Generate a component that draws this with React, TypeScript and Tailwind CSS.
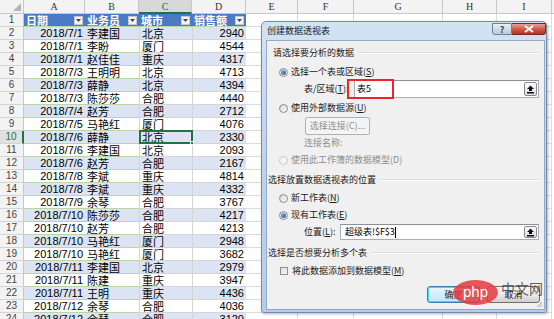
import React from 'react';

const rows: [string, string, string, string][] = [
  ['2018/7/1', '李建国', '北京', '2940'],
  ['2018/7/1', '李盼', '厦门', '4544'],
  ['2018/7/1', '赵佳佳', '重庆', '4317'],
  ['2018/7/3', '王明明', '北京', '4713'],
  ['2018/7/3', '薛静', '北京', '4394'],
  ['2018/7/3', '陈莎莎', '合肥', '4440'],
  ['2018/7/4', '赵芳', '合肥', '2712'],
  ['2018/7/5', '马艳红', '厦门', '4076'],
  ['2018/7/6', '薛静', '北京', '2330'],
  ['2018/7/6', '李建国', '北京', '2093'],
  ['2018/7/6', '赵芳', '合肥', '2167'],
  ['2018/7/8', '李斌', '重庆', '4814'],
  ['2018/7/8', '李斌', '重庆', '4332'],
  ['2018/7/9', '余琴', '合肥', '3767'],
  ['2018/7/10', '陈莎莎', '合肥', '4217'],
  ['2018/7/10', '赵芳', '合肥', '4213'],
  ['2018/7/10', '马艳红', '厦门', '2948'],
  ['2018/7/10', '马艳红', '厦门', '3682'],
  ['2018/7/11', '李建国', '北京', '2979'],
  ['2018/7/11', '陈建', '重庆', '3947'],
  ['2018/7/11', '王明', '重庆', '4436'],
  ['2018/7/12', '余琴', '合肥', '4036'],
  ['2018/7/12', '余琴', '合肥', '3120'],
];

const letters = ['A', 'B', 'C', 'D', 'E', 'F', 'G', 'H', 'I'];
const widths = ['w-[61px]', 'w-[54px]', 'w-[53px]', 'w-[54px]', 'w-[52px]', 'w-[56px]', 'w-[89px]', 'w-[54px]', 'w-[55px]'];
const headers = ['日期', '业务员', '城市', '销售额'];

const cjk = "font-['Noto_Sans_CJK_SC',sans-serif]";
const num = "font-['Liberation_Sans','Noto_Sans_CJK_SC',sans-serif]";

const RowNum = ({ n, active }: { n: number; active?: boolean }) => (
  <div
    className={`w-[24px] shrink-0 border-b border-[#d4d4d4] text-center text-[10px] leading-[12px] ${num} ${
      active ? 'bg-[#e1e1e1] text-[#217346] border-r-2 border-r-[#217346]' : 'bg-[#f3f3f3] text-[#444] border-r border-r-[#c8c8c8]'
    }`}
  >
    {n}
  </div>
);

const Filter = () => (
  <div className="ml-auto mr-[2px] w-[9px] h-[9px] bg-[#f4f4f4] border border-[#c8c8c8] flex items-center justify-center">
    <svg width="5" height="3" viewBox="0 0 5 3">
      <path d="M0 0h5L2.5 3z" fill="#444" />
    </svg>
  </div>
);

const Radio = ({ on, off }: { on?: boolean; off?: boolean }) => (
  <div
    className={`w-[9px] h-[9px] shrink-0 rounded-full border flex items-center justify-center ${
      off ? 'border-[#c9c9c9] bg-[#f4f4f4]' : 'border-[#8a8a8a] bg-gradient-to-br from-[#d8d8d8] to-[#fafafa]'
    }`}
  >
    {on && <div className="w-[5px] h-[5px] rounded-full bg-gradient-to-br from-[#8fb5e6] to-[#1d55a6]" />}
  </div>
);

const Collapse = () => (
  <div className="ml-auto my-[1px] mr-[1px] w-[13px] shrink-0 rounded-[2px] border border-[#8a8a8a] bg-gradient-to-b from-[#fbfbfb] to-[#dcdcdc] flex items-center justify-center">
    <svg width="9" height="9" viewBox="0 0 9 9">
      <path d="M4.5 0.5L8 4H6V6H3V4H1z" fill="#111" />
      <rect x="1" y="7" width="7" height="1.5" fill="#111" />
    </svg>
  </div>
);

const Section = ({ title }: { title: string }) => (
  <div className="flex items-center h-[12px] pr-[5px]">
    <span className="text-[9px] leading-[12px] text-[#1a1a1a]">{title}</span>
    <div className="flex-1 ml-[4px] h-[2px] border-t border-[#d5dfe5] border-b border-b-white" />
  </div>
);

export default function App() {
  return (
    <div className="relative w-[554px] h-[319px] overflow-hidden bg-white">
      {/* spreadsheet */}
      <div className="flex h-[14px] bg-[#f3f3f3]">
        <div className="relative w-[24px] shrink-0 border-r border-b border-[#c8c8c8]">
          <svg className="absolute right-[2px] bottom-[2px]" width="8" height="8" viewBox="0 0 8 8">
            <path d="M8 0V8H0z" fill="#b4b4b4" />
          </svg>
        </div>
        {letters.map((l, i) => (
          <div
            key={l}
            className={`${widths[i]} shrink-0 border-r text-center text-[10px] leading-[13px] font-['Liberation_Serif',serif] ${
              l === 'C'
                ? 'bg-[#d8d8d8] text-[#217346] border-b-2 border-b-[#217346] border-r-[#c8c8c8]'
                : 'text-[#333] border-b border-[#c8c8c8]'
            }`}
          >
            {l}
          </div>
        ))}
        <div className="flex-1 border-b border-[#c8c8c8]" />
      </div>

      <div className="flex h-[13px]">
        <RowNum n={1} />
        {headers.map((h, i) => (
          <div
            key={h}
            className={`${widths[i]} shrink-0 flex items-center bg-[#4a79c6] border-b border-[#b8d6aa] pl-[2px] text-white font-bold text-[11px] leading-[13px] ${cjk}`}
          >
            <span>{h}</span>
            <Filter />
          </div>
        ))}
        {widths.slice(4).map((w) => (
          <div key={w} className={`${w} shrink-0 border-r border-b border-[#dadcdd]`} />
        ))}
      </div>

      {rows.map((r, idx) => {
        const n = idx + 2;
        const band = n % 2 === 0 ? 'bg-[#dce4f4]' : 'bg-white';
        const cell = `shrink-0 whitespace-nowrap border-b border-[#b8d6aa] text-[11px] leading-[12px] text-black ${band}`;
        return (
          <div key={n} className="flex h-[13px]">
            <RowNum n={n} active={n === 10} />
            <div className={`${widths[0]} ${cell} text-right pr-[2px] text-[10.5px] ${num}`}>{r[0]}</div>
            <div className={`${widths[1]} ${cell} pl-[2px] ${cjk}`}>{r[1]}</div>
            <div className={`${widths[2]} ${cell} relative pl-[2px] border-l border-[#d4d4d4] ${cjk}`}>
              {r[2]}
              {n === 10 && (
                <div className="absolute -left-[1px] -top-[1px] w-[54px] h-[14px] border-2 border-[#217346]">
                  <div className="absolute -right-[3px] -bottom-[3px] w-[4px] h-[4px] bg-[#217346] border border-white" />
                </div>
              )}
            </div>
            <div className={`${widths[3]} ${cell} text-right pr-[2px] border-l border-[#d4d4d4] text-[10.5px] ${num}`}>{r[3]}</div>
            {widths.slice(4).map((w) => (
              <div key={w} className={`${w} shrink-0 border-r border-b border-[#dadcdd]`} />
            ))}
          </div>
        );
      })}

      {/* dialog window */}
      <div className={`absolute left-[261px] top-[21px] w-[286px] h-[292px] flex flex-col rounded-t-[5px] rounded-b-[3px] border border-[#6f8cae] bg-gradient-to-b from-[#d3e3f4] via-[#bcd3ec] to-[#b4cde9] shadow-[1px_1px_3px_rgba(0,0,0,0.3)] ${cjk}`}>
        <div className="relative h-[18px] shrink-0 pl-[5px] flex items-center text-[9px] text-[#1a1a1a]">
          创建数据透视表
          <div className="absolute right-[0px] top-[1px] flex h-[12px]">
            <div className="w-[20px] rounded-bl-[3px] border border-[#6d7f97] bg-gradient-to-b from-[#e9eff6] to-[#b9c9dc] flex items-center justify-center text-[9px] leading-none font-bold text-[#444]">
              ?
            </div>
            <div className="w-[34px] rounded-br-[3px] border border-l-0 border-[#7a2a20] bg-gradient-to-b from-[#e7a397] via-[#cf5b48] to-[#b6321f] flex items-center justify-center">
              <svg width="10" height="8" viewBox="0 0 10 8">
                <path d="M1 1L9 7M9 1L1 7" stroke="#fff" strokeWidth="2" />
              </svg>
            </div>
          </div>
        </div>

        <div className="relative flex-1 ml-[4px] mr-[1px] mb-[2px] border border-[#93a9c4] bg-[#f0f0f0] pl-[6px] pt-[6px] flex flex-col whitespace-nowrap text-[9px] leading-[12px] text-[#1a1a1a]">
          <Section title="请选择要分析的数据" />
          <div className="mt-[7px] ml-[6px] flex items-center gap-[3px] h-[12px]">
            <Radio on />
            <span>选择一个表或区域(<u>S</u>)</span>
          </div>
          <div className="mt-[2px] flex items-center h-[18px]">
            <span className="ml-[31px] w-[50px] shrink-0">表/区域(<u>T</u>):</span>
            <div className="mr-[5px] flex-1 h-full flex bg-white border border-[#abadb3] border-t-[#8d8f96]">
              <span className="pl-[2px] self-center text-black">表5</span>
              <Collapse />
            </div>
          </div>
          <div className="mt-[4px] ml-[6px] flex items-center gap-[3px] h-[12px]">
            <Radio />
            <span>使用外部数据源(<u>U</u>)</span>
          </div>
          <div className="mt-[3px] ml-[32px] w-[65px] h-[18px] rounded-[2px] border border-[#adb2b5] bg-[#f4f4f4] flex items-center justify-center text-[#8d8d8d]">
            选择连接(C)...
          </div>
          <div className="mt-[2px] ml-[31px] h-[12px] text-[#8d8d8d]">连接名称:</div>
          <div className="mt-[5px] ml-[6px] flex items-center gap-[3px] h-[12px] text-[#8d8d8d]">
            <Radio off />
            <span>使用此工作簿的数据模型(D)</span>
          </div>
          <div className="mt-[8px] -ml-[5px]">
            <Section title="选择放置数据透视表的位置" />
          </div>
          <div className="mt-[6px] ml-[6px] flex items-center gap-[3px] h-[12px]">
            <Radio />
            <span>新工作表(<u>N</u>)</span>
          </div>
          <div className="mt-[5px] ml-[6px] flex items-center gap-[3px] h-[12px]">
            <Radio on />
            <span>现有工作表(<u>E</u>)</span>
          </div>
          <div className="mt-[3px] flex items-center h-[16px]">
            <span className="ml-[31px] w-[36px] shrink-0">位置(<u>L</u>):</span>
            <div className="mr-[5px] flex-1 h-full flex bg-white border border-[#abadb3] border-t-[#8d8f96]">
              <span className="pl-[4px] self-center text-black">超级表!$F$3</span>
              <span className="self-center w-[1px] h-[11px] bg-black" />
              <Collapse />
            </div>
          </div>
          <div className="mt-[7px] -ml-[5px]">
            <Section title="选择是否想要分析多个表" />
          </div>
          <div className="mt-[6px] ml-[7px] flex items-center gap-[4px] h-[12px]">
            <div className="w-[8px] h-[8px] border border-[#8e8f8f] bg-gradient-to-br from-[#dcdcdc] to-[#f8f8f8]" />
            <span>将此数据添加到数据模型(<u>M</u>)</span>
          </div>
          <div className="mt-[9px] flex gap-[7px] ml-[154px]">
            <div className="w-[53px] h-[17px] rounded-[3px] border border-[#3c7fb1] bg-gradient-to-b from-[#eaf6fd] to-[#bee6fd] shadow-[inset_0_0_0_1px_#48d5fd] flex items-center justify-center">
              确定
            </div>
            <div className="w-[53px] h-[17px] rounded-[3px] border border-[#707070] bg-gradient-to-b from-[#f2f2f2] via-[#ebebeb] to-[#cfcfcf] flex items-center justify-center">
              取消
            </div>
          </div>
          <svg className="absolute right-[1px] bottom-[1px]" width="7" height="7" viewBox="0 0 7 7">
            <path d="M6 1L1 6M6 3.5L3.5 6M6 5.5L5.5 6" stroke="#9aa4b0" strokeWidth="1" />
          </svg>
        </div>

        {/* red highlight box */}
        <div className="absolute left-[85px] top-[57px] w-[47px] h-[20px] border-2 border-[#e8262b]" />
      </div>

      {/* watermark */}
      <div className="absolute left-[453px] top-[280px] w-[45px] h-[25px] rounded-[50%] bg-[#e5393e]/85 flex items-center justify-center text-white text-[15px] font-['Liberation_Sans',sans-serif] leading-none pb-[2px]">
        php
      </div>
      <div className={`absolute left-[501px] top-[281px] text-[14px] leading-[14px] text-[#3a3a3a]/80 ${cjk}`}>
        中文网
      </div>
    </div>
  );
}
